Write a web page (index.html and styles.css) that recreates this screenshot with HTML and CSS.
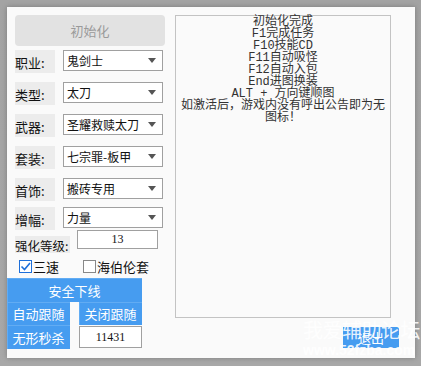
FILE: index.html
```html
<!DOCTYPE html>
<html lang="zh">
<head>
<meta charset="utf-8">
<link rel="stylesheet" href="styles.css">
</head>
<body>
<div class="dialog">
  <div class="left">
    <div class="init-btn">初始化</div>
    <div class="form">
      <div class="row">
        <span class="label">职业:</span>
        <div class="select"><span>鬼剑士</span><i class="arrow"></i></div>
      </div>
      <div class="row">
        <span class="label">类型:</span>
        <div class="select"><span>太刀</span><i class="arrow"></i></div>
      </div>
      <div class="row">
        <span class="label">武器:</span>
        <div class="select"><span>圣耀救赎太刀</span><i class="arrow"></i></div>
      </div>
      <div class="row">
        <span class="label">套装:</span>
        <div class="select"><span>七宗罪-板甲</span><i class="arrow"></i></div>
      </div>
      <div class="row">
        <span class="label">首饰:</span>
        <div class="select"><span>搬砖专用</span><i class="arrow"></i></div>
      </div>
      <div class="row row-last">
        <span class="label">增幅:</span>
        <div class="select"><span>力量</span><i class="arrow"></i></div>
      </div>
      <div class="level-row">
        <span class="level-label">强化等级:</span>
        <div class="num-input">13</div>
      </div>
      <div class="check-row">
        <label class="check"><span class="box checked"><svg viewBox="0 0 13 13" width="13" height="13"><path d="M2.5 6.5 L5.5 9.5 L11 3" fill="none" stroke="#1e6fd9" stroke-width="1.6"/></svg></span>三速</label>
        <label class="check check2"><span class="box"></span>海伯伦套</label>
      </div>
    </div>
    <div class="actions">
      <div class="btn btn-wide">安全下线</div>
      <div class="btn-grid">
        <div class="btn">自动跟随</div>
        <div class="btn">关闭跟随</div>
        <div class="btn">无形秒杀</div>
        <div class="num-input num-small">11431</div>
      </div>
    </div>
  </div>
  <div class="right">
    <div class="log">初始化完成<br>F1完成任务<br>F10技能CD<br>F11自动吸怪<br>F12自动入包<br>End进图换装<br>ALT + 方向键顺图<br>如激活后，游戏内没有呼出公告即为无图标！</div>
    <div class="exit-btn">退出</div>
  </div>
</div>
<div class="watermark">
  <div class="wm-title">我爱辅助论坛</div>
  <div class="wm-url">www.52fzba.com</div>
</div>
</body>
</html>
```

FILE: styles.css
```css
html, body {
  margin: 0;
  padding: 0;
}
body {
  width: 421px;
  height: 366px;
  overflow: hidden;
  background: linear-gradient(#a3a3a3, #a8a8a8);
  font-family: "Noto Sans CJK SC", "Liberation Sans", sans-serif;
  position: relative;
}
.dialog {
  margin: 7px;
  width: 408px;
  height: 351px;
  background: #fafafa;
  box-shadow: 0 0 5px rgba(0,0,0,0.25);
  display: flex;
}
.left {
  width: 168px;
  padding-top: 8px;
  display: flex;
  flex-direction: column;
}
.init-btn {
  margin-left: 8px;
  width: 150px;
  height: 31px;
  background: #e2e2e2;
  border-radius: 4px;
  color: #9a9a9a;
  font-size: 13px;
  display: flex;
  align-items: center;
  justify-content: center;
}
.form {
  margin-left: 8px;
  padding-top: 4px;
}
.row {
  display: flex;
  align-items: flex-start;
  height: 23px;
  margin-bottom: 9px;
}
.row-last {
  margin-bottom: 0;
}
.row:nth-child(5) {
  margin-bottom: 6px;
}
.label {
  width: 40px;
  height: 23px;
  background: #ececec;
  font-size: 13px;
  color: #111;
  line-height: 25px;
  white-space: nowrap;
}
.select {
  margin-left: 8px;
  width: 100px;
  height: 21px;
  box-sizing: border-box;
  border: 1px solid #a0a0a0;
  background: #fff;
  display: flex;
  align-items: center;
  justify-content: space-between;
  padding: 0 6px 0 3px;
  font-size: 12px;
  color: #111;
  white-space: nowrap;
}
.arrow {
  flex: none;
  width: 0;
  height: 0;
  border-left: 4px solid transparent;
  border-right: 4px solid transparent;
  border-top: 5px solid #555;
}
.level-row {
  display: flex;
  align-items: flex-start;
  height: 29px;
}
.level-label {
  width: 55px;
  flex: none;
  margin-top: 6px;
  height: 17px;
  background: #ececec;
  font-size: 12.5px;
  line-height: 20px;
  color: #111;
  white-space: nowrap;
}
.num-input {
  margin-left: 7px;
  width: 81px;
  height: 19px;
  box-sizing: border-box;
  border: 1px solid #a0a0a0;
  background: #fff;
  font-family: "Liberation Serif", serif;
  font-size: 12px;
  display: flex;
  align-items: center;
  justify-content: center;
  color: #111;
}
.check-row {
  display: flex;
  height: 19px;
  font-size: 13px;
  color: #111;
  white-space: nowrap;
}
.check {
  display: flex;
  align-items: center;
  height: 14px;
  margin-left: 4px;
}
.check2 {
  margin-left: 24px;
}
.box {
  width: 13px;
  height: 13px;
  box-sizing: border-box;
  border: 1px solid #888;
  background: #fff;
  margin-right: 1px;
  display: block;
}
.box.checked {
  border-color: #1e6fd9;
}
.box svg {
  display: block;
  margin: -1px;
}
.actions {
  width: 135px;
}
.btn {
  background: #469cf0;
  color: #fff;
  font-size: 13px;
  height: 23px;
  display: flex;
  align-items: center;
  justify-content: center;
  box-shadow: inset 1px 1px 0 #62acf3;
  white-space: nowrap;
}
.btn-wide {
  height: 24px;
}
.btn-grid {
  display: grid;
  grid-template-columns: 63px 63px;
  column-gap: 9px;
}
.btn-grid .btn:nth-child(3) {
  height: 24px;
}
.num-small {
  margin: 1px 0 0 0;
  width: 63px;
  height: 22px;
}
.right {
  width: 224px;
  padding-top: 8px;
  display: flex;
  flex-direction: column;
}
.log {
  width: 216px;
  height: 303px;
  box-sizing: border-box;
  border: 1px solid #c3c3c3;
  font-family: "Liberation Mono", "Noto Sans CJK SC", monospace;
  font-size: 12px;
  line-height: 12px;
  color: #333;
  text-align: center;
  padding: 0 3px;
}
.exit-btn {
  align-self: flex-end;
  margin-top: 9px;
  width: 56px;
  height: 21px;
  background: #469cf0;
  color: #fff;
  font-size: 13px;
  display: flex;
  align-items: center;
  justify-content: center;
}
.watermark {
  position: absolute;
  left: 303px;
  top: 318px;
  color: rgba(255,255,255,0.88);
  white-space: nowrap;
}
.wm-title {
  font-size: 20px;
  line-height: 24px;
  letter-spacing: -0.5px;
}
.wm-url {
  font-family: "Liberation Sans", sans-serif;
  font-weight: bold;
  font-size: 14px;
  line-height: 16px;
}
```
